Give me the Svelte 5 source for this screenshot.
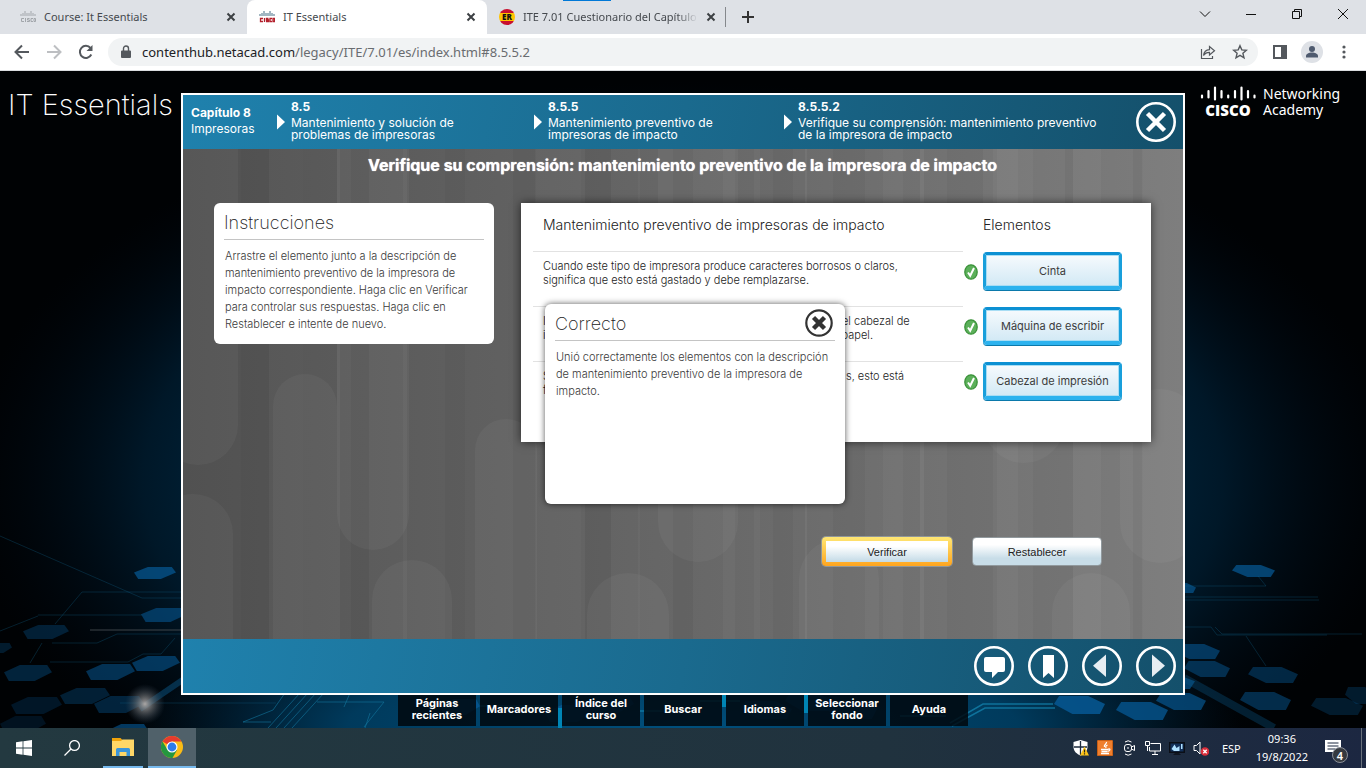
<script>
  const crumbs = [
    { number: '8.5', lines: ['Mantenimiento y solución de', 'problemas de impresoras'] },
    { number: '8.5.5', lines: ['Mantenimiento preventivo de', 'impresoras de impacto'] },
    { number: '8.5.5.2', lines: ['Verifique su comprensión: mantenimiento preventivo', 'de la impresora de impacto'] }
  ];

  // each line is a list of the runs left visible on both sides of the dialog
  const rows = [
    { lines: [['Cuando este tipo de impresora produce caracteres borrosos o claros,'], ['significa que esto está gastado y debe remplazarse.']], item: 'Cinta' },
    { lines: [['I', 'el cabezal de'], ['i', 'papel.']], item: 'Máquina de escribir' },
    { lines: [['S', 's, esto está'], ['f']], item: 'Cabezal de impresión' }
  ];

  const menu = [['Páginas', 'recientes'], ['Marcadores'], ['Índice del', 'curso'], ['Buscar'], ['Idiomas'], ['Seleccionar', 'fondo'], ['Ayuda']];

  // x, y, width, height, opacity, mirrored
  const hexes = [
    [134, 496, 42, 12, 0.75, 0], [141, 537, 46, 14, 0.6, 0], [23, 554, 46, 14, 0.35, 0],
    [-12, 572, 24, 10, 0.3, 0], [4, 594, 48, 16, 0.4, 0], [86, 593, 49, 16, 0.55, 0],
    [132, 585, 48, 15, 0.6, 0], [60, 617, 50, 16, 0.35, 0], [11, 626, 51, 17, 0.25, 0],
    [94, 625, 50, 17, 0.4, 0], [0, 645, 46, 17, 0.2, 0], [108, 653, 40, 14, 0.65, 0],
    [1232, 494, 43, 12, 0.75, 1], [1168, 512, 28, 10, 0.7, 1], [1172, 573, 48, 15, 0.6, 1],
    [1184, 590, 46, 16, 0.5, 1], [1248, 596, 50, 16, 0.45, 1], [1145, 604, 50, 14, 0.7, 1],
    [1054, 625, 51, 18, 0.9, 1], [1116, 631, 52, 18, 0.8, 1], [1156, 622, 50, 17, 0.7, 1],
    [1240, 621, 51, 18, 0.5, 1], [1311, 627, 52, 17, 0.3, 1], [1345, 616, 30, 17, 0.3, 1],
    [440, 628, 40, 16, 0.9, 0], [545, 634, 50, 17, 0.9, 0], [580, 624, 54, 20, 0.9, 0],
    [740, 630, 52, 18, 0.9, 1], [785, 622, 48, 18, 0.9, 1], [825, 630, 52, 18, 0.9, 1]
  ];
  const shape = [[0, 0.45], [0.33, 0], [0.9, 0], [1, 0.45], [0.64, 1], [0.1, 1]];
  const points = ([x, y, w, h, , flip]) =>
    shape.map(([a, b]) => `${x + (flip ? 1 - a : a) * w},${y + b * h}`).join(' ');

  // x, width, opacity of the light and dark bands behind the activity
  const bands = [
    [0, 58, -0.03], [58, 28, -0.05], [86, 34, 0.01], [154, 3, 0.04], [168, 18, -0.04], [186, 34, 0.01],
    [220, 4, 0.03], [262, 20, -0.03], [330, 22, -0.03], [353, 45, 0.02], [402, 26, -0.05], [455, 2, 0.03],
    [490, 20, -0.04], [540, 12, 0.03], [571, 6, 0.03], [590, 20, -0.03], [622, 2, 0.05], [650, 32, -0.03],
    [700, 20, 0.03], [737, 4, 0.05], [764, 50, -0.03], [810, 25, 0.03], [850, 40, -0.03], [890, 28, 0.03], [950, 9, -0.04], [960, 40, 0.02]
  ];
  // x, y, width, height of the rounded columns
  const pills = [
    [-25, -80, 80, 396], [-30, 345, 80, 220], [90, 225, 64, 330], [154, -80, 72, 481], [189, 411, 80, 160],
    [292, 270, 62, 320], [475, -80, 80, 493], [404, 424, 82, 160], [616, 390, 80, 180],
    [800, -80, 82, 394], [869, 424, 78, 160], [937, 240, 80, 174]
  ];
</script>

<svelte:head><title>IT Essentials</title></svelte:head>

<div class="desktop">
  <header class="browser">
    <div class="tabs">
      <div class="tab">
        <svg class="fav" viewBox="0 0 16 16" fill="none" stroke="#a2a6ab"><path d="M1 5v2M3 4v3M5 2v5M7 4v3M9 4v3M11 2v5M13 4v3M15 5v2" /><path d="M4 9.5H1.500v3H4M5.500 9v4M9.500 9.500H7.500v1.500h2v1.500H7M13 9.500h-2v3h2M14 9.500h1.500v3H14z" /></svg>
        <span class="name">Course: It Essentials</span>
        <button class="x" aria-label="Cerrar"><svg viewBox="0 0 10 10"><path d="M1.500 1.500l7 7M8.500 1.500l-7 7" /></svg></button>
      </div>
      <div class="tab active">
        <svg class="fav" viewBox="0 0 16 16" fill="none"><path stroke="#456f85" d="M1 5v2M3 4v3M5 2v5M7 4v3M9 4v3M11 2v5M13 4v3M15 5v2" /><path stroke="#b3202c" stroke-width="1.300" d="M4 9.500H1.500v3H4M5.500 9v4M9.500 9.500H7.500v1.500h2v1.500H7M13 9.500h-2v3h2M14 9.500h1.500v3H14z" /></svg>
        <span class="name">IT Essentials</span>
        <button class="x" aria-label="Cerrar"><svg viewBox="0 0 10 10"><path d="M1.500 1.500l7 7M8.500 1.500l-7 7" /></svg></button>
      </div>
      <div class="tab">
        <span class="er">ER</span>
        <span class="name fade">ITE 7.01 Cuestionario del Capítulo</span>
        <button class="x" aria-label="Cerrar"><svg viewBox="0 0 10 10"><path d="M1.500 1.500l7 7M8.500 1.500l-7 7" /></svg></button>
      </div>
      <button class="plus" aria-label="Nueva pestaña"><svg viewBox="0 0 12 12"><path d="M6 0v12M0 6h12" /></svg></button>
      <div class="wins">
        <button aria-label="Buscar pestañas"><svg viewBox="0 0 12 12"><path d="M1 3.500l5 5 5-5" /></svg></button>
        <button aria-label="Minimizar"><svg viewBox="0 0 12 12"><path d="M1 6.500h10" /></svg></button>
        <button aria-label="Restaurar"><svg viewBox="0 0 12 12"><path d="M1.500 3.500h7v7h-7zM3.500 3.500v-2h7v7h-2" /></svg></button>
        <button aria-label="Cerrar"><svg viewBox="0 0 12 12"><path d="M1 1l10 10M11 1L1 11" /></svg></button>
      </div>
    </div>
    <div class="toolbar">
      <button aria-label="Atrás"><svg viewBox="0 0 16 16" stroke="#54585d"><path d="M15 8H2M8 1.500L1.500 8 8 14.500" /></svg></button>
      <button aria-label="Adelante"><svg viewBox="0 0 16 16" stroke="#bdbfc2"><path d="M1 8h13M8 1.500L14.500 8 8 14.500" /></svg></button>
      <button aria-label="Recargar"><svg viewBox="0 0 16 16" stroke="#54585d"><path d="M13.300 10.500A6 6 0 1 1 12.500 4" /><path d="M14.500 1v6h-6z" fill="#54585d" stroke="none" /></svg></button>
      <div class="omni">
        <svg class="lock" viewBox="0 0 10 14"><path d="M1 5.500h8a1 1 0 0 1 1 1V12a1 1 0 0 1-1 1H1a1 1 0 0 1-1-1V6.500a1 1 0 0 1 1-1z" fill="#54585d" /><path d="M2.500 6V3.500a2.500 2.500 0 0 1 5 0V6" fill="none" stroke="#54585d" stroke-width="1.400" /></svg>
        <span class="url"><b>contenthub.netacad.com</b>/legacy/ITE/7.01/es/index.html#8.5.5.2</span>
        <button aria-label="Compartir"><svg viewBox="0 0 16 16" stroke="#54585d"><path stroke-width="1.200" d="M1.500 5v9.500h11V12M3.500 11.500C4 7.500 6 6 9.500 5.700V2.500l5 4.300-5 4.200V8.300c-3 0-4.500.7-6 3.200z" /></svg></button>
        <button aria-label="Favorito"><svg viewBox="0 0 16 16" stroke="#54585d"><path stroke-width="1.400" d="M8 1.700l1.800 4.200 4.600.4-3.500 3 1.100 4.500L8 11.400l-4 2.400 1.100-4.500-3.500-3 4.600-.4z" /></svg></button>
      </div>
      <button aria-label="Panel lateral"><svg viewBox="0 0 16 16" stroke="#54585d"><path d="M2 2h12v12H2z" /><path d="M10 2h4v12h-4z" fill="#54585d" /></svg></button>
      <button class="avatar" aria-label="Perfil"><svg viewBox="0 0 22 22"><circle cx="11" cy="8" r="3" fill="#4e5a6e" /><path d="M5 16.500v-1.500c0-2 3-3.500 6-3.500s6 1.500 6 3.500v1.500z" fill="#4e5a6e" /></svg></button>
      <button aria-label="Menú"><svg viewBox="0 0 16 16"><g fill="#54585d"><circle cx="8" cy="3" r="1.600" /><circle cx="8" cy="8" r="1.600" /><circle cx="8" cy="13" r="1.600" /></g></svg></button>
    </div>
  </header>

  <main class="page">
    <svg class="scene" viewBox="0 0 1366 657" preserveAspectRatio="xMidYMax slice" aria-hidden="true">
      <defs>
        <radialGradient id="glow"><stop offset="0" stop-color="#004470" /><stop offset="0.600" stop-color="#00253d" /><stop offset="0.750" stop-color="#001a2c" stop-opacity="0.900" /><stop offset="1" stop-color="#000812" stop-opacity="0" /></radialGradient>
        <radialGradient id="flare"><stop offset="0" stop-color="#aaa6a4" /><stop offset="0.450" stop-color="#6c7074" stop-opacity="0.600" /><stop offset="1" stop-color="#345" stop-opacity="0" /></radialGradient>
        <radialGradient id="low"><stop offset="0" stop-color="#004f7c" /><stop offset="0.600" stop-color="#003e62" stop-opacity="0.900" /><stop offset="1" stop-color="#00253f" stop-opacity="0" /></radialGradient>
      </defs>
      <rect width="1366" height="657" fill="#000204" />
      <ellipse cx="683" cy="410" rx="720" ry="400" fill="url(#glow)" />
      <ellipse cx="683" cy="657" rx="560" ry="110" fill="url(#low)" />
      <g fill="#05558f">{#each hexes as h}<polygon points={points(h)} opacity={h[4]} />{/each}</g>
      <g fill="none" stroke="#0f6690" stroke-width="1" opacity="0.300">
        <path d="M0 465L142 527H182M182 521H82L55 553M38 544H142M52 572h45l20-9h65M30 592l12-20M50 591h78l15-8h18l14-16M120 632h156M0 560l38-15" />
        <path d="M1184 526h134M1184 529h135M1258 505l8 10M1184 515h82M1184 556h27l6 8h110M1215 556l7 7h140M1246 565l20 30" />
      </g>
      <g fill="none" stroke="#12779f" stroke-width="1" opacity="0.600">
        <path d="M285 622l-12 17-30 12h28M300 622l-32 35M308 622l-32 35M316 622l-32 35M324 622l-32 35M317 631h67l-20 25M350 622l-6 14M370 642l-5 15" />
      </g>
      <path d="M140 638l44-30" stroke="#0a5584" stroke-width="6" opacity="0.500" />
      <path d="M1184 607l90 50" stroke="#0a5584" stroke-width="8" opacity="0.350" />
      <g fill="none" stroke="#1489b5" stroke-width="1.500" opacity="0.700">
        <path d="M950 652l33-19h70M952 655l33-18h70M700 630h40M900 645h46M480 635h65M640 640h50" />
      </g>
      <g fill="#0085b5"><rect x="558" y="637" width="4" height="20" /><rect x="804" y="622" width="4" height="20" /><rect x="722" y="624" width="4" height="12" /></g>
      <rect x="90" y="558" width="92" height="2" fill="#4b5358" opacity="0.400" />
      <circle cx="145" cy="633" r="20" fill="url(#flare)" />
    </svg>

    <div class="brand">IT Essentials</div>

    <section class="lesson" aria-label="Actividad">
      <div class="bar top">
        <div class="chapter"><b>Capítulo 8</b><span>Impresoras</span></div>
        {#each crumbs as crumb}
          <a class="crumb" href="#{crumb.number}">
            <svg viewBox="0 0 8 16"><path d="M0 0.500L8 8 0 15.500z" fill="#fff" /></svg>
            <span class="where"><b>{crumb.number}</b>{#each crumb.lines as line}<span>{line}</span>{/each}</span>
          </a>
        {/each}
        <button class="round" aria-label="Cerrar lección"><svg viewBox="0 0 40 40"><circle cx="20" cy="20" r="18.700" /><path stroke-width="4.500" d="M11.500 11.500l17 17M28.500 11.500l-17 17" /></svg></button>
      </div>

      <div class="stage">
        <svg class="backdrop" viewBox="0 0 1000 490" preserveAspectRatio="none" aria-hidden="true">
          {#each bands as [x, w, o]}<rect {x} y="0" width={w} height="490" fill={o < 0 ? '#000' : '#fff'} opacity={Math.abs(o)} />{/each}
          {#each pills as [x, y, w, h]}<rect {x} {y} width={w} height={h} rx={w / 2} fill="#fff" opacity="0.040" />{/each}
        </svg>
        <h1>Verifique su comprensión: mantenimiento preventivo de la impresora de impacto</h1>
        <div class="cards">
          <article class="note">
            <h2>Instrucciones</h2>
            <p>Arrastre el elemento junto a la descripción de mantenimiento preventivo de la impresora de impacto correspondiente. Haga clic en Verificar para controlar sus respuestas. Haga clic en Restablecer e intente de nuevo.</p>
          </article>
          <article class="activity">
            <div class="heads"><h3>Mantenimiento preventivo de impresoras de impacto</h3><h3>Elementos</h3></div>
            {#each rows as row}
              <div class="match">
                <p>{#each row.lines as line}<span class="line">{#each line as run}<span>{run}</span>{/each}</span>{/each}</p>
                <svg viewBox="0 0 14 16"><ellipse cx="7" cy="8" rx="6.200" ry="7.200" fill="#5cb05a" stroke="#3a9239" stroke-width="1.300" /><path d="M4 8.500l2.200 3.200L10 4" fill="none" stroke="#fff" stroke-width="2" /></svg>
                <button class="chip">{row.item}</button>
              </div>
            {/each}
            <div class="dialog" role="dialog" aria-label="Correcto">
              <h2>Correcto</h2>
              <p>Unió correctamente los elementos con la descripción de mantenimiento preventivo de la impresora de impacto.</p>
              <button aria-label="Cerrar mensaje"><svg viewBox="0 0 28 28"><circle cx="14" cy="14" r="12.700" fill="none" stroke="#333" stroke-width="2.200" /><path d="M8.500 8.500l11 11M19.500 8.500l-11 11" stroke="#333" stroke-width="4.400" /></svg></button>
            </div>
          </article>
        </div>
        <div class="actions">
          <button class="act focus">Verificar</button>
          <button class="act">Restablecer</button>
        </div>
      </div>

      <div class="bar bottom">
        <button class="round" aria-label="Comentarios"><svg viewBox="0 0 40 40"><circle cx="20" cy="20" r="18.700" /><path class="solid" d="M12 11h17q2 0 2 2v11q0 2-2 2h-5l-6 6v-6h-6q-2 0-2-2V13q0-2 2-2z" /></svg></button>
        <button class="round" aria-label="Marcador"><svg viewBox="0 0 40 40"><circle cx="20" cy="20" r="18.700" /><path class="solid" d="M15 9h11v23l-5.500-5-5.500 5z" /></svg></button>
        <button class="round" aria-label="Anterior"><svg viewBox="0 0 40 40"><circle cx="20" cy="20" r="18.700" /><path class="pale" d="M24 8.500v22.500L11 19.700z" /></svg></button>
        <button class="round" aria-label="Siguiente"><svg viewBox="0 0 40 40"><circle cx="20" cy="20" r="18.700" /><path class="pale" d="M16 8.500v22.500l13-11.300z" /></svg></button>
      </div>
    </section>

    <div class="academy">
      <div class="cisco">
        <svg viewBox="0 0 56 15"><path stroke="#fff" stroke-width="2.200" stroke-linecap="round" d="M2 9.500v2M8.500 5v6.500M15 1.500v12M21.500 5v6.500M28.200 9.500v2M35 5v6.500M41.500 1.500v12M48 5v6.500M54.500 9.500v2" /></svg>
        <b>CISCO</b>
      </div>
      <p><span>Networking</span><span>Academy</span></p>
    </div>

    <nav class="menu">
      {#each menu as lines}<button>{#each lines as line}<span>{line}</span>{/each}</button>{/each}
    </nav>
  </main>

  <footer class="taskbar">
    <button class="task" aria-label="Inicio"><svg viewBox="0 0 16 16" fill="#fff"><path d="M0 2.300L6.600 1.300v6.200H0zM7.400 1.200L16 0v7.500H7.400zM0 8.400h6.600v6.300L0 13.700zM7.400 8.400H16V16l-8.600-1.200z" /></svg></button>
    <button class="task" aria-label="Buscar"><svg viewBox="0 0 16 16" fill="none" stroke="#fff" stroke-width="1.300"><circle cx="10.500" cy="5.500" r="4.900" /><path d="M7 9l-6.500 6.500" /></svg></button>
    <button class="task open" aria-label="Explorador"><svg class="big" viewBox="0 0 22 22"><path d="M0 2h8.500l2 2H22v16H0z" fill="#f0a30a" /><path d="M0 5h9l1.500-1.500H22V20H0z" fill="#ffd767" /><path d="M4 20v-6.500q0-1.500 1.500-1.500h11q1.500 0 1.500 1.500V20h-3.500v-4h-7v4z" fill="#3b95d9" /></svg></button>
    <button class="task current" aria-label="Chrome"><svg class="big" viewBox="0 0 22 22"><circle cx="11" cy="11" r="11" fill="#fbbc16" /><path d="M11 11L1.500 5.500A11 11 0 0 1 20.500 5.500H11z" fill="#e63b2e" /><path d="M11 11l5 3-4.500 8A11 11 0 0 1 1.500 5.500L6 13z" fill="#24973f" /><circle cx="11" cy="11" r="5.500" fill="#fff" /><circle cx="11" cy="11" r="4.400" fill="#2f7bea" /></svg></button>
    <div class="tray">
      <svg viewBox="0 0 16 16"><path d="M7.500 0l7 2v5c0 4.500-3.500 7-7 8.500C4 14 .5 11.500.5 7V2z" fill="#fff" /><path d="M7.500 1v14M1 7h13" stroke="#1d2b3d" stroke-width="1.300" /><path d="M11.500 6.500l4.500 9H7z" fill="#fcc419" /><path d="M11.500 9.500v3M11.500 13.300v1.200" stroke="#222" stroke-width="1.200" /></svg>
      <svg viewBox="0 0 16 16"><rect width="16" height="16" rx="1.500" fill="#ef7f2e" /><rect x="0.500" y="0.500" width="15" height="15" rx="1" fill="none" stroke="#c85e14" /><path d="M9.500 2c.5 2-3 2.800-2 5M10.500 5c-2 1-2 1.500-1.500 3M4 9.500h7.500M4.500 11.500h6M4 13.500h8M11.500 9c2.300-.5 1.500 2-.7 2.300" fill="none" stroke="#fff" stroke-width="1.300" /></svg>
      <svg viewBox="0 0 16 16" fill="none" stroke="#fff"><path d="M4 2Q7 -0.500 10.500 2M4 14Q7 16.500 10.500 14M10.500 7l3-1.500v5l-3-1.500" /><rect x="3.500" y="4.500" width="7" height="7" rx="2.500" /><path d="M7 7v2" /></svg>
      <svg viewBox="0 0 16 16" fill="none" stroke="#fff"><path d="M5.500 3.500h10v7.500H4.500V7M10 11v3M7 14.500h6M0.500 1.500h4v4h-4zM2.500 5.500v5.500" /></svg>
      <svg viewBox="0 0 16 16"><path d="M0 2h16v11H0z" fill="#0b0f17" /><path d="M1.500 3.500h13v8h-13z" fill="#12305a" /><path d="M2.500 9l3-4.500 2 3.500 3-2v5H5zM12 4h1.500v5H12z" fill="#aee0ff" /><path d="M4 15h8l-2-2H6z" fill="#10151f" /></svg>
      <svg viewBox="0 0 16 16"><path d="M1 5.500h2.500L7 2v12l-3.500-3.500H1z" fill="none" stroke="#fff" /><circle cx="12" cy="11.500" r="4.300" fill="#d92d3a" /><path d="M10.300 9.800l3.400 3.400M13.700 9.800l-3.400 3.400" stroke="#fff" stroke-width="1.300" /></svg>
      <span class="lang">ESP</span>
      <span class="clock"><span>09:36</span><span>19/8/2022</span></span>
      <button class="alerts" aria-label="Notificaciones"><svg viewBox="0 0 16 16"><path d="M0 0h16v12h-4v4l-4-4H0z" fill="#fff" /><path d="M2.500 3h11M2.500 6h11M2.500 9h8" stroke="#1c2840" /></svg><span>4</span></button>
    </div>
  </footer>
</div>

<style>
  :global(body) { background: #000204; }
  .desktop, .desktop :global(*) { box-sizing: border-box; }
  .desktop { min-height: 100vh; display: flex; flex-direction: column; font-family: Inter, "Liberation Sans", sans-serif; }
  button { font: inherit; color: inherit; background: none; border: 0; padding: 0; }
  h1, h2, h3, p { margin: 0; }
  svg { display: block; flex: none; }

  .browser { font-family: "Noto Sans", "Open Sans", sans-serif; background: #fff; border-bottom: 1px solid #dadce0; }
  .tabs { position: relative; display: flex; align-items: flex-start; height: 34px; background: #dee1e6; }
  .tabs::after { content: ""; position: absolute; top: 0; left: 563px; width: 48px; height: 1px; background: #0078d7; }
  .tab { position: relative; display: flex; align-items: center; gap: 8px; width: 240px; height: 34px; padding: 0 11px 1px 12px; font-size: 11px; color: #45494e; }
  .tab:first-child { width: 247px; padding-left: 20px; }
  .tab.active { background: #fff; border-radius: 8px 8px 0 0; }
  .tab:nth-child(3)::after { content: ""; position: absolute; right: 1px; top: 7px; width: 1px; height: 20px; background: #85888c; }
  .fav { width: 16px; height: 16px; }
  .name { flex: 1; padding-bottom: 1px; white-space: nowrap; overflow: hidden; }
  .fade { mask-image: linear-gradient(90deg, #000 88%, transparent); }
  .er { display: grid; place-items: center; width: 16px; height: 16px; border-radius: 50%; background: linear-gradient(#c8102e 25%, #ffc400 25% 75%, #c8102e 75%); font: 800 8px "Open Sans", sans-serif; color: #111; }
  .x svg { width: 10px; height: 10px; fill: none; stroke: #3c4043; stroke-width: 2; }
  .plus { display: grid; place-items: center; height: 33px; margin-left: 15px; }
  .plus svg { width: 12px; height: 12px; stroke: #333; stroke-width: 2; }
  .wins { display: flex; margin-left: auto; }
  .wins button { display: grid; place-items: center; width: 46px; height: 28px; }
  .wins svg { width: 12px; height: 12px; fill: none; stroke: #111; }

  .toolbar { display: flex; align-items: center; gap: 16px; height: 36px; padding: 0 14px; }
  .toolbar svg { width: 16px; height: 16px; }
  .toolbar button svg { fill: none; stroke-width: 2; }
  .omni { flex: 1; display: flex; align-items: center; gap: 16px; height: 28px; margin: 0 -2px 0 -2px; padding: 0 10px 0 13px; border-radius: 14px; background: #f1f3f4; }
  .omni .lock { width: 10px; height: 14px; }
  .url { flex: 1; margin-left: -5px; font-size: 13px; color: #696c70; white-space: nowrap; }
  .url b { font-weight: 400; color: #202124; }
  .toolbar .avatar { margin: 0 -3px; border-radius: 50%; background: #dee1e6; }
  .toolbar .avatar svg { width: 22px; height: 22px; }

  .page { position: relative; flex: 1; display: grid; grid-template: auto auto / 1fr minmax(0, 1004px) 1fr; align-content: start; padding-top: 22px; color: #fff; }
  .scene { position: absolute; inset: 0; width: 100%; height: 100%; }
  .brand { position: relative; padding-left: 8px; font-size: 29px; line-height: 24px; font-weight: 200; white-space: nowrap; }
  .academy { position: relative; display: flex; gap: 7px; padding-left: 15px; align-self: start; margin-top: -7px; }
  .cisco { display: flex; flex-direction: column; align-items: center; }
  .cisco svg { width: 56px; height: 15px; fill: none; }
  .cisco b { font: 800 15px/18px "Open Sans", sans-serif; }
  .academy p { display: grid; align-content: start; font: 14px/16px "Noto Sans", sans-serif; }

  .lesson { position: relative; border: 2px solid #fff; }
  .bar { display: flex; align-items: center; height: 54px; padding: 0 7px 0 8px; background: linear-gradient(100deg, #1f81ad, #1a6a8e 50%, #14506b); }
  .top { display: grid; grid-template-columns: 86px 257px 250px 1fr 40px; font-size: 12px; }
  .chapter, .where { display: grid; padding-bottom: 2px; }
  .chapter { line-height: 16px; }
  .crumb { display: flex; align-items: center; gap: 6px; color: inherit; text-decoration: none; line-height: 12px; white-space: nowrap; }
  .crumb svg { width: 8px; height: 16px; }
  .where b { margin-bottom: 4px; }
  .round svg { width: 40px; height: 40px; fill: none; stroke: #fff; stroke-width: 2.600; }
  .round .solid { fill: #fff; stroke: none; }
  .round .pale { fill: #e6edf2; stroke: none; }
  .bottom { justify-content: flex-end; gap: 14px; }

  .stage { position: relative; padding: 0 32px 73px 31px; background: linear-gradient(90deg, #545454, #676767 50%, #7c7c7c); }
  .backdrop { position: absolute; inset: 0; width: 100%; height: 100%; }
  h1 { position: relative; font-size: 16px; line-height: 32px; text-align: center; text-shadow: 0 0 1px #fff; }
  .cards { position: relative; z-index: 1; display: grid; grid-template-columns: 280px minmax(0, 630px); justify-content: space-between; align-items: start; margin-top: 22px; color: #3a3a3a; }
  .note, .dialog { border-radius: 6px; background: #fff; font-size: 11px; line-height: 17px; font-weight: 300; }
  .note { padding: 7px 10px 11px; }
  h2 { padding-bottom: 3px; border-bottom: 1px solid #c4c4c4; font-size: 18px; line-height: 26px; font-weight: 200; color: #222; }
  .note p, .dialog p { margin: 8px 0 0 1px; }
  .activity { position: relative; padding: 0 29px 26px 12px; background: #fff; box-shadow: 0 0 9px rgba(0, 0, 0, 0.6); }
  .heads, .match { display: grid; grid-template-columns: 1fr 18px 139px; gap: 1px; }
  .heads { height: 48px; padding-top: 13px; }
  .heads h3 { font-size: 14px; line-height: 18px; font-weight: 300; color: #222; }
  .heads h3:first-child { grid-column: span 2; padding-left: 10px; }
  .match { height: 55px; align-items: start; }
  .match p { display: grid; justify-items: start; height: 55px; align-content: start; padding: 7px 0 0 10px; border-top: 1px solid #e2e2e2; font-size: 11px; line-height: 14px; font-weight: 300; color: #222; white-space: nowrap; }
  .line { display: flex; }
  .line span + span { margin-left: 296px; }
  .match svg { width: 14px; height: 16px; margin-top: 13px; }
  .chip { height: 38px; margin-top: 1px; border: 3px solid #199fdb; border-top-color: #0c90d3; border-bottom: 4px solid #2cb2ee; border-radius: 4px; background: linear-gradient(#f6fafd, #d2e9f5); box-shadow: 0 1px #0b79ab, inset 0 0 0 1px #a8ddf4; font-size: 11px; color: #3c3c3c; }
  .dialog { position: absolute; top: 101px; left: 24px; width: 300px; height: 200px; padding: 7px 10px; box-shadow: 0 0 6px rgba(0, 0, 0, 0.65); }
  .dialog button { position: absolute; top: 5px; right: 12px; }
  .dialog svg { width: 28px; height: 28px; }
  .actions { position: relative; display: flex; justify-content: flex-end; gap: 20px; margin: 95px 49px 0 0; }
  .act { width: 130px; height: 29px; border: 1px solid #91999d; border-radius: 4px; background: linear-gradient(#fff 25%, #c8dde8 75%); font-family: "Liberation Sans", Arial, sans-serif; font-size: 11px; color: #222; }
  .act.focus { border: 4px solid transparent; background: linear-gradient(#fff 25%, #c3dae6) padding-box, linear-gradient(#ffe774, #ffa51f) border-box; box-shadow: 0 0 0 1px #909698; }

  .menu { position: relative; grid-column: 1 / -1; display: flex; justify-content: center; gap: 4px; margin-bottom: 2px; font-size: 11px; font-weight: 700; line-height: 12px; }
  .menu button { display: grid; align-content: center; width: 78px; height: 31px; padding-bottom: 3px; background: rgba(0, 5, 10, 0.82); }

  .taskbar { display: flex; height: 40px; background: linear-gradient(90deg, #233940, #20323e 65%, #1c2741); color: #fff; font-family: "Noto Sans", "Open Sans", sans-serif; font-size: 11px; }
  .task { display: grid; place-items: center; width: 48px; height: 40px; }
  .task svg { width: 16px; height: 16px; }
  .task .big { width: 22px; height: 22px; }
  .open { width: 40px; margin: 0 5px 0 7px; border-bottom: 2px solid #76b9ed; }
  .current { background: #50616a; border-bottom: 2px solid #76b9ed; }
  .tray { display: flex; align-items: center; gap: 8px; margin-left: auto; padding-right: 4px; }
  .tray svg { width: 16px; height: 16px; }
  .lang { margin-left: 5px; }
  .clock { display: grid; margin-left: 7px; line-height: 18px; text-align: center; }
  .alerts { position: relative; margin: 0 12px 0 9px; }
  .alerts span { position: absolute; top: 7px; left: 7px; display: grid; place-items: center; width: 16px; height: 16px; border: 1px solid #8b9099; border-radius: 50%; background: #35393f; font-weight: 600; }
  .tray::after { content: ""; width: 1px; height: 40px; background: #69717c; }
</style>
